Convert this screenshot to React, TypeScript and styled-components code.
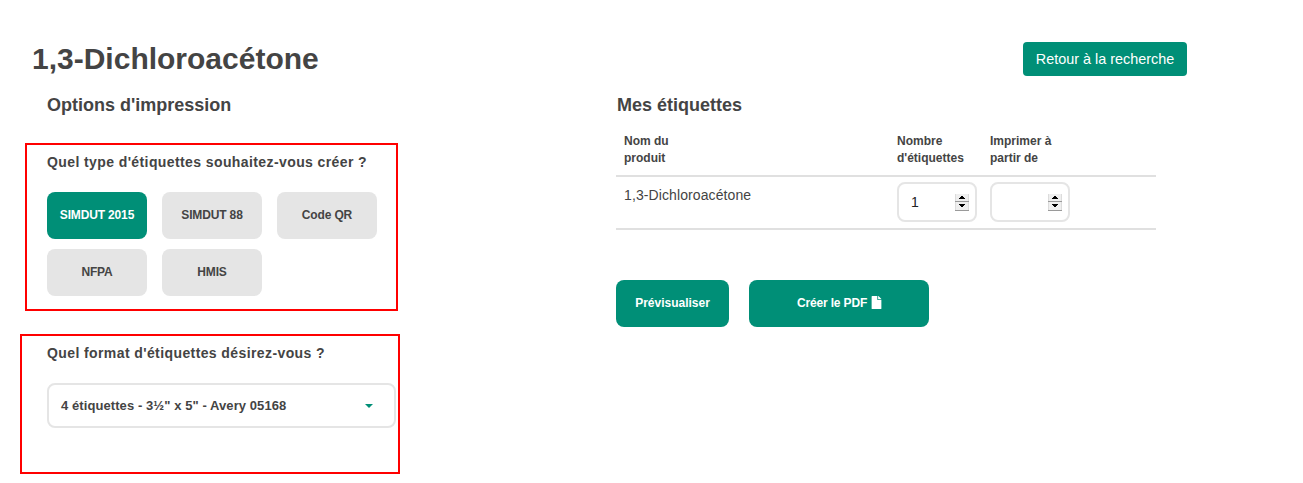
import React from "react";
import styled, { createGlobalStyle } from "styled-components";
import { FaFile } from "react-icons/fa";

const teal = "#008f77";
const ink = "#444444";

const GlobalStyle = createGlobalStyle`
  html, body {
    margin: 0;
    padding: 0;
    background: #fff;
    color: ${ink};
    font-family: "Liberation Sans", Arial, sans-serif;
  }
`;

const Page = styled.div`
  width: 1303px;
  height: 483px;
  overflow: hidden;
  box-sizing: border-box;
  padding-top: 42px;
`;

const Header = styled.header`
  display: flex;
  justify-content: space-between;
  align-items: flex-start;
  width: 1187px;
  padding-left: 32px;
  box-sizing: border-box;
  height: 53px;
`;

const Title = styled.h1`
  margin: 0;
  font-size: 30px;
  line-height: 34px;
  font-weight: 700;
`;

const BackButton = styled.button`
  width: 164px;
  height: 34px;
  border: 0;
  border-radius: 4px;
  background: ${teal};
  color: #fff;
  font: 14.4px "Liberation Sans", Arial, sans-serif;
  padding: 0;
`;

const Columns = styled.div`
  display: grid;
  grid-template-columns: 616px 540px;
`;

const LeftColumn = styled.section`
  display: flex;
  flex-direction: column;
`;

const SectionTitle = styled.h2<{ $indent: number }>`
  margin: 0 0 0 ${(p) => p.$indent}px;
  font-size: 18px;
  line-height: 20px;
  font-weight: 700;
`;

const OptionBox = styled.div<{ $left: number; $width: number; $height: number; $top: number }>`
  box-sizing: border-box;
  margin: ${(p) => p.$top}px 0 0 ${(p) => p.$left}px;
  width: ${(p) => p.$width}px;
  height: ${(p) => p.$height}px;
  border: 2px solid #ff0000;
  padding: 10px 0 0 ${(p) => 45 - p.$left}px;
`;

const Question = styled.p`
  margin: 0;
  font-size: 14px;
  line-height: 15px;
  font-weight: 700;
  letter-spacing: 0.4px;
`;

const TypeGrid = styled.div`
  display: grid;
  grid-template-columns: repeat(3, 100px);
  grid-auto-rows: 47px;
  column-gap: 15px;
  row-gap: 10px;
  margin-top: 22px;
`;

const TypeButton = styled.button<{ $active?: boolean }>`
  border: 0;
  border-radius: 8px;
  padding: 0 0 1px;
  background: ${(p) => (p.$active ? teal : "#e5e5e5")};
  color: ${(p) => (p.$active ? "#fff" : ink)};
  font: 700 12px "Liberation Sans", Arial, sans-serif;
  letter-spacing: -0.15px;
`;

const FormatSelect = styled.div`
  box-sizing: border-box;
  width: 349px;
  height: 45px;
  margin-top: 22px;
  padding: 0 21px 0 12px;
  border: 2px solid #e5e5e5;
  border-radius: 8px;
  display: flex;
  align-items: center;
  justify-content: space-between;
  font-size: 13px;
  letter-spacing: 0.08px;
  font-weight: 700;
`;

const Caret = styled.span`
  width: 0;
  height: 0;
  border-left: 4px solid transparent;
  border-right: 4px solid transparent;
  border-top: 4px solid ${teal};
`;

const LabelTable = styled.table`
  width: 540px;
  margin-top: 8px;
  border-collapse: collapse;
  table-layout: fixed;
`;

const HeadCell = styled.th<{ $width?: number }>`
  box-sizing: border-box;
  width: ${(p) => (p.$width ? `${p.$width}px` : "auto")};
  padding: 10px 8px 8px;
  text-align: left;
  vertical-align: top;
  font-size: 12px;
  line-height: 17px;
  font-weight: 700;
  border-bottom: 2px solid #e0e0e0;
`;

const BodyCell = styled.td`
  height: 51px;
  padding: 5px 8px 6px;
  box-sizing: border-box;
  vertical-align: top;
  font-size: 14px;
  line-height: 16px;
  border-bottom: 2px solid #e0e0e0;
`;

const ProductName = styled.span`
  display: block;
  padding-top: 5px;
  letter-spacing: 0.1px;
`;

const NumberBox = styled.div`
  box-sizing: border-box;
  width: 80px;
  height: 40px;
  border: 2px solid #e5e5e5;
  border-radius: 8px;
  display: flex;
  align-items: center;
  padding: 0 6px 0 12px;
`;

const NumberValue = styled.span`
  flex: 1;
  font-size: 14px;
  color: #222;
`;

const Spinner = styled.svg`
  display: block;
  width: 14px;
  height: 17px;
  shape-rendering: crispEdges;
`;

const Actions = styled.div`
  display: flex;
  gap: 20px;
  margin-top: 50px;
`;

const ActionButton = styled.button<{ $width: number; $tight?: boolean }>`
  width: ${(p) => p.$width}px;
  height: 47px;
  border: 0;
  border-radius: 8px;
  padding: 0 0 2px ${(p) => (p.$tight ? 2 : 0)}px;
  background: ${teal};
  color: #fff;
  font: 700 12px "Liberation Sans", Arial, sans-serif;
  letter-spacing: ${(p) => (p.$tight ? "-0.15px" : "0")};
  display: flex;
  align-items: center;
  justify-content: center;
  gap: 3px;
`;

function SpinArrows() {
  return (
    <Spinner viewBox="0 0 14 17">
      <rect width="14" height="17" fill="#dcdcdc" />
      <rect x="1" width="12" height="7" fill="#efefef" />
      <rect x="1" y="8" width="12" height="8" fill="#efefef" />
      <rect y="7" width="14" height="1" fill="#9a9a9a" />
      <rect y="16" width="14" height="1" fill="#9a9a9a" />
      <path d="M6 2h2v1h1v1h1v1H4V4h1V3h1z" fill="#000" />
      <path d="M4 10h6v1H9v1H8v1H6v-1H5v-1H4z" fill="#000" />
    </Spinner>
  );
}

export default function App() {
  return (
    <Page>
      <GlobalStyle />
      <Header>
        <Title>1,3-Dichloroacétone</Title>
        <BackButton>Retour à la recherche</BackButton>
      </Header>
      <Columns>
        <LeftColumn>
          <SectionTitle $indent={47}>Options d'impression</SectionTitle>
          <OptionBox $left={25} $width={373} $height={168} $top={28}>
            <Question>Quel type d'étiquettes souhaitez-vous créer ?</Question>
            <TypeGrid>
              <TypeButton $active>SIMDUT 2015</TypeButton>
              <TypeButton>SIMDUT 88</TypeButton>
              <TypeButton>Code QR</TypeButton>
              <TypeButton>NFPA</TypeButton>
              <TypeButton>HMIS</TypeButton>
            </TypeGrid>
          </OptionBox>
          <OptionBox $left={20} $width={380} $height={140} $top={23}>
            <Question>Quel format d'étiquettes désirez-vous ?</Question>
            <FormatSelect>
              4 étiquettes - 3½" x 5" - Avery 05168
              <Caret />
            </FormatSelect>
          </OptionBox>
        </LeftColumn>
        <section>
          <SectionTitle $indent={1}>Mes étiquettes</SectionTitle>
          <LabelTable>
            <thead>
              <tr>
                <HeadCell $width={273}>
                  Nom du
                  <br />
                  produit
                </HeadCell>
                <HeadCell $width={93}>
                  Nombre
                  <br />
                  d'étiquettes
                </HeadCell>
                <HeadCell>
                  Imprimer à
                  <br />
                  partir de
                </HeadCell>
              </tr>
            </thead>
            <tbody>
              <tr>
                <BodyCell>
                  <ProductName>1,3-Dichloroacétone</ProductName>
                </BodyCell>
                <BodyCell>
                  <NumberBox>
                    <NumberValue>1</NumberValue>
                    <SpinArrows />
                  </NumberBox>
                </BodyCell>
                <BodyCell>
                  <NumberBox>
                    <NumberValue />
                    <SpinArrows />
                  </NumberBox>
                </BodyCell>
              </tr>
            </tbody>
          </LabelTable>
          <Actions>
            <ActionButton $width={113}>Prévisualiser</ActionButton>
            <ActionButton $width={180} $tight>
              Créer le PDF <FaFile size={13} />
            </ActionButton>
          </Actions>
        </section>
      </Columns>
    </Page>
  );
}
